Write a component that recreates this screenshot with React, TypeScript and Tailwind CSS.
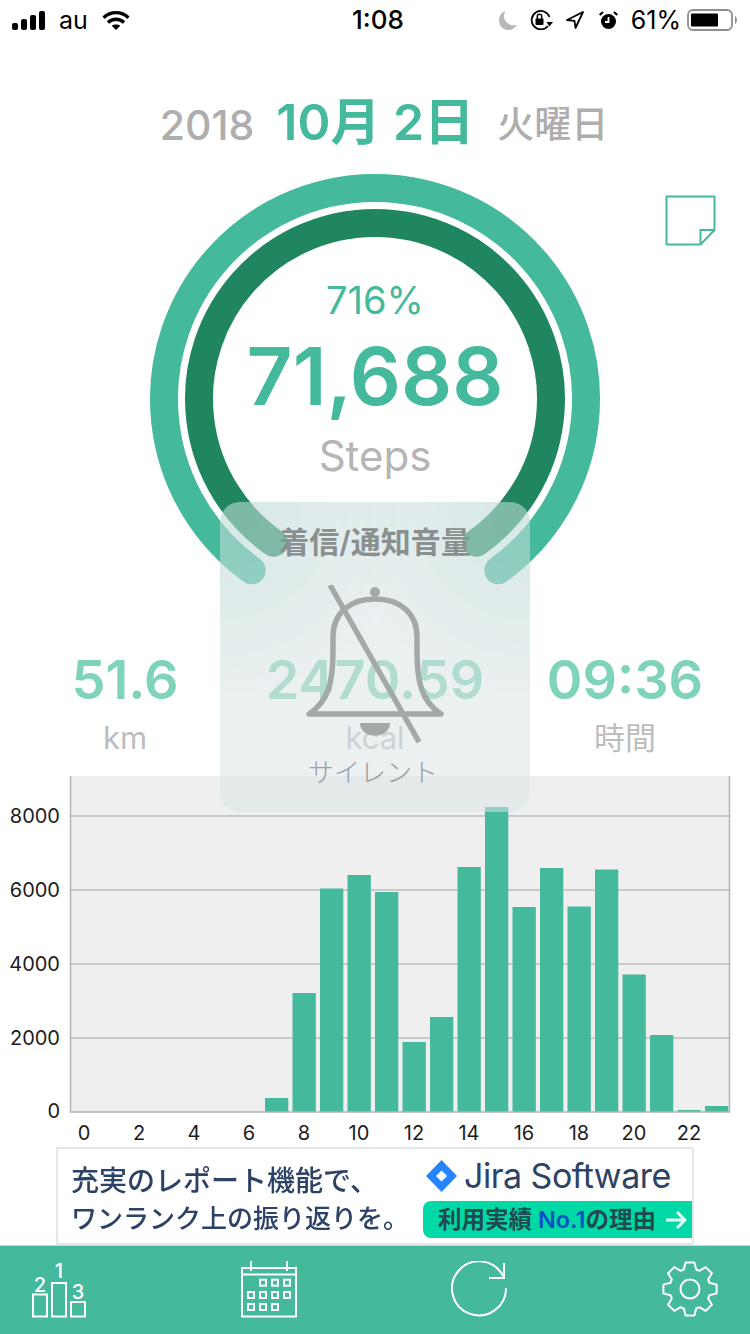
const green = "#44b99b";

// hourly steps, bar heights in px above the baseline
const bars = [0, 0, 0, 0, 0, 0, 0, 14, 119, 223.5, 237, 220, 70, 95, 245, 305, 205, 244, 205.5, 242.5, 137.5, 77, 2, 6];
const gridRows = [
  { y: 816, label: "8000" },
  { y: 890, label: "6000" },
  { y: 964, label: "4000" },
  { y: 1038, label: "2000" },
];
const hours = [0, 2, 4, 6, 8, 10, 12, 14, 16, 18, 20, 22];

const latin = "font-['Inter','Noto_Sans_CJK_JP',sans-serif]";

function StatusBar() {
  return (
    <div className="relative flex h-[40px] items-center justify-between pl-[12px] pr-[12px] text-black">
      <div className="flex items-center">
        <svg width="33" height="19" viewBox="0 0 33 19" fill="black">
          <rect x="0" y="12" width="6" height="7" rx="2" />
          <rect x="9" y="8" width="6" height="11" rx="2" />
          <rect x="18" y="4" width="6" height="15" rx="2" />
          <rect x="27" y="0" width="6" height="19" rx="2" />
        </svg>
        <span className="ml-[14px] text-[25px] leading-none">au</span>
        <svg className="ml-[14px]" width="28" height="21" viewBox="0 0 29 22" fill="none" stroke="black" strokeWidth="3.6">
          <path d="M1.5 8 C9 1 20 1 27.5 8" />
          <path d="M6 13 C11 8.5 18 8.5 23 13" />
          <path d="M14.5 21 L10 16.6 C12.5 14.6 16.5 14.6 19 16.6 Z" fill="black" stroke="none" />
        </svg>
      </div>
      <span className="absolute left-[352px] text-[26px] font-medium leading-none">1:08</span>
      <div className="flex items-center">
        <svg width="18" height="19" viewBox="0 0 18 19" fill="#b8b8b8">
          <path d="M6.5 0 C2 1.5 0 5.5 0 9.5 C0 15 4 19 9.5 19 C13 19 16 17 18 14 C11 15.5 5.5 11 5 6 C4.8 4 5.4 2 6.5 0 Z" />
        </svg>
        <svg className="ml-[13px]" width="23" height="20" viewBox="0 0 23 20" fill="none" stroke="black" strokeWidth="1.8">
          <path d="M18 16 A9.2 9.2 0 1 1 19.5 7" />
          <path d="M16.5 12 L23 12 L19.5 16.5 Z" fill="black" stroke="none" />
          <rect x="5.5" y="8.5" width="8" height="6.5" rx="1" fill="black" stroke="none" />
          <path d="M7.3 9 V6.5 A2.2 2.2 0 0 1 11.7 6.5 V9" strokeWidth="1.5" />
        </svg>
        <svg className="ml-[13px]" width="18" height="18" viewBox="0 0 18 18" fill="none" stroke="black" strokeWidth="1.8" strokeLinejoin="round">
          <path d="M17 1 L1 9 L8.5 9.8 L9.5 17 Z" />
        </svg>
        <svg className="ml-[15px]" width="19" height="19" viewBox="0 0 19 19">
          <circle cx="9.5" cy="10.5" r="7.5" fill="black" />
          <path d="M9.5 6 V11 H6" stroke="white" strokeWidth="1.8" fill="none" />
          <path d="M0.7 4 L4 1 M18.3 4 L15 1" stroke="black" strokeWidth="2" />
        </svg>
        <span className="ml-[13px] text-[25px] leading-none">61%</span>
        <svg className="ml-[6px]" width="51" height="22" viewBox="0 0 51 22">
          <rect x="1" y="1" width="44" height="20" rx="5" fill="none" stroke="#8e8e8e" strokeWidth="1.8" />
          <rect x="4" y="4.5" width="27" height="13" rx="1" fill="black" />
          <path d="M48 7 C50.5 8 50.5 14 48 15 Z" fill="#8e8e8e" />
        </svg>
      </div>
    </div>
  );
}

function RingSection() {
  return (
    <div className="relative h-[430px] w-[750px]">
      {/* ring centre sits at 375,229 in this box */}
      <svg className="block" width="750" height="430" viewBox="0 0 750 430" fill="none">
        <path d="M251.8 400.3 A211 211 0 1 1 498.2 400.3" stroke={green} strokeWidth="28" strokeLinecap="round" />
        <path d="M273.6 372.8 A176 176 0 1 1 476.4 372.8" stroke="#208660" strokeWidth="28" strokeLinecap="round" />
      </svg>
      <div className="absolute left-[225px] top-[108px] flex w-[300px] flex-col items-center">
        <span className="text-[38px] leading-[44px] text-[#44b99b]">716%</span>
        <span className="mt-[8px] text-[80px] font-semibold leading-[92px] text-[#44b99b]">71,688</span>
        <span className="mt-[10px] text-[42px] leading-[48px] text-[#b5b5b5]">Steps</span>
      </div>
      {/* memo button */}
      <svg className="absolute left-[665px] top-[25px]" width="51" height="51" viewBox="0 0 51 51" fill="none" stroke="#44b99b" strokeWidth="2">
        <path d="M1.5 1.5 H49.5 V35 L35.5 49.5 H1.5 Z" strokeLinejoin="round" />
        <path d="M35.5 49.5 V35 H49.5" />
      </svg>
    </div>
  );
}

function Stat({ value, unit }: { value: string; unit: string }) {
  return (
    <div className="flex flex-col items-center">
      <span className="text-[54px] font-semibold leading-[62px] text-[#80d3bb]">{value}</span>
      <span className="mt-[7px] text-[31px] leading-[40px] text-[#bdbdbd]">{unit}</span>
    </div>
  );
}

function Chart() {
  return (
    <svg className="block" width="750" height="371" viewBox="0 776 750 371">
      <rect x="70" y="776" width="660" height="336" fill="#efefef" />
      {gridRows.map((r) => (
        <line key={r.y} x1="70" x2="730" y1={r.y} y2={r.y} stroke="#bcbcbc" strokeWidth="1.5" />
      ))}
      {bars.map((h, i) => (
        <rect key={i} x={72.5 + 27.5 * i} y={1112 - h} width="23.3" height={h} fill={green} />
      ))}
      <path d="M70.5 776 V1112 H729.5 V776" fill="none" stroke="#b4b4b4" strokeWidth="1.5" />
      <g fill="#1c1c1c" fontSize="20" fontFamily="Inter, sans-serif">
        {gridRows.map((r) => (
          <text key={r.label} x="60" y={r.y + 7} textAnchor="end">{r.label}</text>
        ))}
        <text x="60" y="1118" textAnchor="end">0</text>
        {hours.map((h) => (
          <text key={h} x={84 + 27.5 * h} y="1140" textAnchor="middle">{h}</text>
        ))}
      </g>
    </svg>
  );
}

function AdBanner() {
  return (
    <div className="mx-auto flex h-[98px] w-[638px] border-2 border-[#e3e6ea] bg-white">
      <div className="flex w-[365px] flex-col justify-center pl-[13px] pt-[8px] font-medium leading-[37px] text-[#2c4266] blur-[0.4px]">
        <span className="whitespace-nowrap text-[28px]">充実のレポート機能で、</span>
        <span className="whitespace-nowrap text-[26px]">ワンランク上の振り返りを。</span>
      </div>
      <div className="flex flex-1 flex-col items-start">
        <div className="mt-[10px] flex items-center pl-[3px]">
          <svg width="31" height="32" viewBox="0 0 31 32">
            <path d="M15.5 0 L31 16 L15.5 32 L0 16 Z" fill="#2684ff" />
            <path d="M15.5 10.5 L21 16 L15.5 21.5 L10 16 Z" fill="white" />
          </svg>
          <span className="ml-[7px] whitespace-nowrap text-[34px] leading-none tracking-[-0.5px] text-[#2c4266]">Jira Software</span>
        </div>
        <div className="mt-[8px] flex h-[37px] w-full items-center rounded-l-[8px] bg-[#00d9a5] pl-[15px] text-[23.5px] font-semibold text-[#1f4a52]">
          <span className="whitespace-nowrap">利用実績 <span className="text-[#0a52c4]">No.1</span>の理由</span>
          <svg className="ml-[9px] shrink-0" width="22" height="20" viewBox="0 0 22 20" fill="none" stroke="#e8fff8" strokeWidth="3">
            <path d="M1 10 H20 M12 2 L20 10 L12 18" />
          </svg>
        </div>
      </div>
    </div>
  );
}

// gear outline with 8 teeth, computed so the teeth stay even
function gearPath() {
  const pts: string[] = [];
  const teeth = 8;
  for (let i = 0; i < teeth; i++) {
    const a = (i * 2 * Math.PI) / teeth - Math.PI / 2;
    const step = (2 * Math.PI) / teeth;
    const offs: [number, number][] = [
      [-0.3, 20.5],
      [-0.16, 27],
      [0.16, 27],
      [0.3, 20.5],
    ];
    offs.forEach(([o, r]) => {
      const t = a + o * step * 1.3;
      pts.push(`${(28 + r * Math.cos(t)).toFixed(1)} ${(28 + r * Math.sin(t)).toFixed(1)}`);
    });
  }
  return "M" + pts.join(" L") + " Z";
}

function BottomNav() {
  const cells = [
    [22, 21.7], [34, 21.7], [46, 21.7],
    [10, 34], [22, 34], [34, 34], [46, 34],
    [10, 46], [22, 46], [34, 46],
  ];
  return (
    <div className="flex h-[89px] items-start justify-between border-t border-[#cfd6d3] bg-[#44b99b] pl-[32px] pr-[32px] pt-[15px]">
      <svg className="mt-[-6px]" width="55" height="63" viewBox="0 -6 55 63" fill="none" stroke="white" strokeWidth="2">
        <rect x="1" y="33.5" width="14" height="22" />
        <rect x="20" y="22" width="14" height="33.5" />
        <rect x="39" y="41" width="14" height="14.5" />
        <g fill="white" stroke="none" fontSize="20" fontWeight="500" fontFamily="Inter, sans-serif" textAnchor="middle">
          <text x="8" y="31">2</text>
          <text x="27" y="17">1</text>
          <text x="46" y="38">3</text>
        </g>
      </svg>
      <svg width="56" height="57" viewBox="0 0 56 57" fill="none" stroke="white" strokeWidth="2">
        <rect x="1" y="7" width="54" height="48.5" />
        <path d="M1 13.5 H55 M10 0 V10 M46 0 V10" />
        {cells.map(([x, y]) => (
          <rect key={`${x}-${y}`} x={x - 3} y={y - 3} width="6" height="6" />
        ))}
      </svg>
      <svg width="57" height="57" viewBox="0 0 57 57" fill="none" stroke="white" strokeWidth="2">
        <path d="M55 27 A27 27 0 1 1 52 15" />
        <path d="M53 2 V17 H38" />
      </svg>
      <svg width="56" height="56" viewBox="0 0 56 56" fill="none" stroke="white" strokeWidth="2" strokeLinejoin="round">
        <path d={gearPath()} />
        <circle cx="28" cy="28" r="9.5" />
      </svg>
    </div>
  );
}

function SilentHud() {
  return (
    <div className="absolute left-[220px] top-[502px] flex h-[310px] w-[310px] flex-col items-center rounded-[20px] bg-[#dbe4e6]/[.55] bg-[radial-gradient(circle_at_0%_0%,rgba(68,185,155,0.14),rgba(68,185,155,0)_45%),radial-gradient(circle_at_100%_0%,rgba(68,185,155,0.14),rgba(68,185,155,0)_45%)]">
      <span className="mt-[21px] text-[30px] font-semibold leading-[38px] text-[#8a8f90]">着信/通知音量</span>
      <svg className="mt-[24px]" width="140" height="160" viewBox="0 0 140 160" fill="none" stroke="#a3a9a9" strokeWidth="5.5">
        <path d="M4 129 C24 116 28 96 28 66 L28 52 C28 28 45 14 70 14 C95 14 112 28 112 52 L112 66 C112 96 116 116 136 129 Z" strokeLinejoin="round" />
        <circle cx="70" cy="7" r="5" fill="#a3a9a9" stroke="none" />
        <path d="M55 138 H85 C85 155 55 155 55 138 Z" fill="#a3a9a9" stroke="none" />
        <path d="M25 0 L114 157" />
      </svg>
      <span className="mr-[4px] mt-[12px] text-[26px] font-light leading-[32px] text-[#9a9fa2]">サイレント</span>
    </div>
  );
}

export default function App() {
  return (
    <div className={`relative flex h-[1334px] w-[750px] flex-col overflow-hidden bg-white ${latin}`}>
      <StatusBar />

      <div className="flex h-[130px] items-end justify-center pb-[21px] pl-[18px]">
        <span className="text-[41px] font-medium leading-[48px] text-[#aeaeae]">2018</span>
        <span className="ml-[22px] text-[50px] font-semibold leading-[54px] text-[#44b99b]">10月 2日</span>
        <span className="ml-[23px] text-[37px] font-medium leading-[48px] text-[#aeaeae]">火曜日</span>
      </div>

      <RingSection />

      <div className="mt-[49px] grid h-[127px] grid-cols-3 text-center">
        <Stat value="51.6" unit="km" />
        <Stat value="2470.59" unit="kcal" />
        <Stat value="09:36" unit="時間" />
      </div>

      <Chart />
      <AdBanner />
      <BottomNav />

      <SilentHud />
    </div>
  );
}
